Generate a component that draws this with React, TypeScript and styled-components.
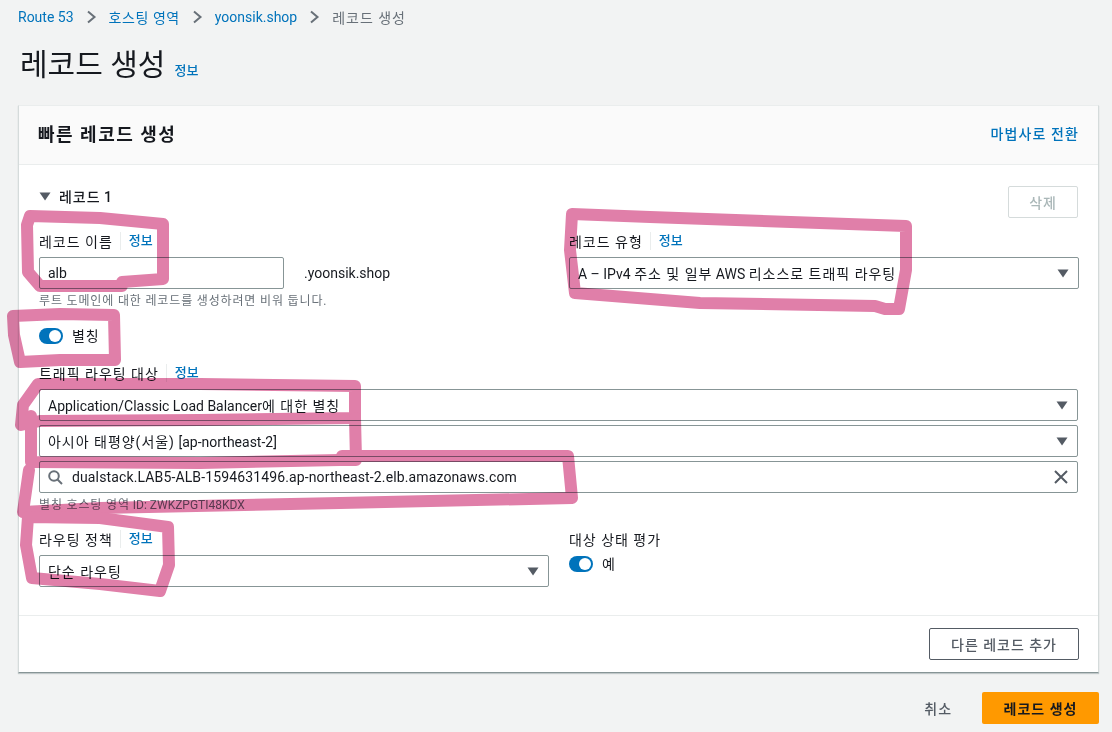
import React from 'react';
import styled, { createGlobalStyle } from 'styled-components';

const fontStack = `Roboto, "Noto Sans CJK KR", sans-serif`;

const GlobalStyle = createGlobalStyle`
  html, body {
    margin: 0;
    padding: 0;
    background-color: #f2f3f3;
    font-family: ${fontStack};
    color: #16191f;
  }
`;

const PageWrapper = styled.div`
  position: relative;
  width: 1112px;
  height: 732px;
  overflow: hidden;
  box-sizing: border-box;
  padding: 0 13px 0 18px;
`;

// Korean runs are set wider than the latin text next to them
const Ko = styled.span`
  letter-spacing: 0.07em;
`;

const Breadcrumbs = styled.nav`
  display: flex;
  align-items: center;
  height: 34px;
  gap: 12px;
  font-size: 14px;
`;

const CrumbLink = styled.span`
  color: #0073bb;
  letter-spacing: 0.04em;

  &:first-child,
  &:nth-child(5) {
    letter-spacing: 0;
  }
`;

const CrumbCurrent = styled.span`
  color: #687078;
  letter-spacing: 0.07em;
`;

const TitleRow = styled.div`
  display: flex;
  align-items: baseline;
  gap: 9px;
  height: 71px;
  padding: 11px 0 0 2px;
  box-sizing: border-box;
`;

const PageTitle = styled.h1`
  margin: 0;
  font-size: 30px;
  font-weight: 400;
  line-height: 40px;
`;

const InfoLink = styled.a`
  color: #0073bb;
  font-size: 13px;
  font-weight: 500;
`;

const Card = styled.section`
  background: #fff;
  border: 1px solid #d5dbdb;
  border-top-color: #eaeded;
  border-bottom-color: #879596;
  box-shadow: 0 1px 1px rgba(0, 28, 36, 0.2);
  height: 568px;
  box-sizing: border-box;
  display: flex;
  flex-direction: column;
`;

const CardHeader = styled.header`
  display: flex;
  align-items: center;
  justify-content: space-between;
  height: 59px;
  flex: none;
  padding: 0 19px 5px 19px;
  background: #fafafa;
  border-bottom: 1px solid #eaeded;
  box-sizing: border-box;
`;

const CardTitle = styled.h2`
  margin: 0;
  font-size: 18px;
  font-weight: 700;
  letter-spacing: 1.5px;
`;

const HeaderAction = styled.a`
  color: #0073bb;
  font-size: 14px;
  font-weight: 500;
  letter-spacing: 1.1px;
`;

const CardBody = styled.div`
  flex: 1;
  padding: 21px 20px 0;
`;

const RecordHeader = styled.div`
  display: flex;
  align-items: flex-start;
  justify-content: space-between;
  height: 32px;
  margin-bottom: 14px;
`;

const RecordToggle = styled.div`
  display: flex;
  align-items: center;
  gap: 8px;
  height: 20px;
  font-size: 14px;
  font-weight: 500;
`;

const FieldGrid = styled.div`
  display: grid;
  grid-template-columns: 510px 510px;
  column-gap: 20px;
`;

const Label = styled.div`
  display: flex;
  align-items: center;
  height: 18px;
  margin-bottom: 7px;
  font-size: 14px;
  color: #16191f;
`;

const LabelInfo = styled(InfoLink)`
  margin-left: 7px;
  padding-left: 8px;
  border-left: 1px solid #eaeded;
  line-height: 18px;
`;

const InputRow = styled.div`
  display: flex;
  align-items: center;
  gap: 20px;
  font-size: 14px;
  color: #16191f;
`;

const Field = styled.div<{ $width?: number }>`
  display: flex;
  align-items: center;
  box-sizing: border-box;
  height: 32px;
  width: ${(p) => (p.$width ? `${p.$width}px` : '100%')};
  padding: 0 9px 0 8px;
  background: #fff;
  border: 1px solid #879596;
  border-radius: 2px;
  font-size: 14px;
  color: #16191f;
  white-space: nowrap;
`;

const FieldText = styled.span`
  flex: 1;
  white-space: pre;
`;

const SearchText = styled(FieldText)`
  margin-left: 9px;
  letter-spacing: 0.13px;
`;

const Hint = styled.div`
  font-size: 12px;
  line-height: 16px;
  color: #687078;
  margin-top: 4px;
`;

const ToggleRow = styled.div`
  display: flex;
  align-items: center;
  gap: 9px;
  font-size: 14px;
`;

const ToggleLabel = styled(Ko)`
  margin-top: -3px;
`;

const AliasRow = styled(ToggleRow)`
  margin: 19px 0 20px;
  height: 16px;
`;

const HealthRow = styled(ToggleRow)`
  height: 16px;
  margin: 8px 0 0 0;
`;

const Track = styled.span`
  position: relative;
  display: inline-block;
  width: 24px;
  height: 16px;
  border-radius: 8px;
  background: #0073bb;
`;

const Knob = styled.span`
  position: absolute;
  top: 2px;
  right: 2px;
  width: 12px;
  height: 12px;
  border-radius: 50%;
  background: #fff;
`;

const Stack = styled.div`
  display: flex;
  flex-direction: column;
  gap: 4px;
`;

const PolicyGrid = styled(FieldGrid)`
  margin-top: 17px;
`;

const CardFooter = styled.footer`
  display: flex;
  justify-content: flex-end;
  align-items: center;
  flex: none;
  height: 57px;
  padding: 0 19px 0 0;
  border-top: 1px solid #eaeded;
  box-sizing: border-box;
`;

const OutlineButton = styled.button`
  width: 150px;
  height: 32px;
  background: #fff;
  border: 1px solid #545b64;
  border-radius: 2px;
  color: #545b64;
  font: 500 14px ${fontStack};
`;

const DeleteButton = styled(OutlineButton)`
  width: 70px;
  border-color: #d5dbdb;
  color: #aab7b8;
`;

const PageActions = styled.div`
  display: flex;
  justify-content: flex-end;
  align-items: center;
  gap: 30px;
  padding-top: 19px;
`;

const CancelLink = styled.span`
  color: #545b64;
  font-size: 14px;
  font-weight: 500;
`;

const PrimaryButton = styled.button`
  width: 117px;
  height: 32px;
  background: #ff9900;
  border: none;
  border-radius: 2px;
  color: #16191f;
  font: 700 14px ${fontStack};
`;

const Scribbles = styled.svg`
  position: absolute;
  left: 0;
  top: 0;
  mix-blend-mode: multiply;
  pointer-events: none;
`;

const Scribble = styled.path`
  fill: none;
  stroke: #e07fa9;
  stroke-width: 12;
  stroke-linejoin: round;
  stroke-linecap: round;
`;

const Chevron = () => (
  <svg width="11" height="14" viewBox="0 0 11 14" fill="none">
    <path d="M2 1.5 L8.5 7 L2 12.5" stroke="#687078" strokeWidth="2" />
  </svg>
);

const Caret = () => (
  <svg width="12" height="9" viewBox="0 0 12 9">
    <path d="M0.5 0.5 H11.5 L6 8.5 Z" fill="#545b64" />
  </svg>
);

const SearchIcon = () => (
  <svg width="15" height="15" viewBox="0 0 15 15" fill="none" stroke="#687078" strokeWidth="2">
    <circle cx="6" cy="6" r="4.8" />
    <path d="M9.5 9.5 L14 14" />
  </svg>
);

const ClearIcon = () => (
  <svg width="14" height="14" viewBox="0 0 14 14" fill="none" stroke="#545b64" strokeWidth="2">
    <path d="M1 1 L13 13 M13 1 L1 13" />
  </svg>
);

const Toggle = () => (
  <Track>
    <Knob />
  </Track>
);

const App: React.FC = () => {
  return (
    <PageWrapper>
      <GlobalStyle />
      <Breadcrumbs>
        <CrumbLink>Route 53</CrumbLink>
        <Chevron />
        <CrumbLink>호스팅 영역</CrumbLink>
        <Chevron />
        <CrumbLink>yoonsik.shop</CrumbLink>
        <Chevron />
        <CrumbCurrent>레코드 생성</CrumbCurrent>
      </Breadcrumbs>

      <TitleRow>
        <PageTitle>레코드 생성</PageTitle>
        <InfoLink>정보</InfoLink>
      </TitleRow>

      <Card>
        <CardHeader>
          <CardTitle>빠른 레코드 생성</CardTitle>
          <HeaderAction>마법사로 전환</HeaderAction>
        </CardHeader>

        <CardBody>
          <RecordHeader>
            <RecordToggle>
              <Caret />
              <span><Ko>레코드</Ko> 1</span>
            </RecordToggle>
            <DeleteButton disabled><Ko>삭제</Ko></DeleteButton>
          </RecordHeader>

          <FieldGrid>
            <div>
              <Label>
                <Ko>레코드 이름</Ko><LabelInfo>정보</LabelInfo>
              </Label>
              <InputRow>
                <Field $width={245}>alb</Field>
                .yoonsik.shop
              </InputRow>
              <Hint><Ko>루트 도메인에 대한 레코드를 생성하려면 비워 둡니다.</Ko></Hint>
            </div>
            <div>
              <Label>
                <Ko>레코드 유형</Ko><LabelInfo>정보</LabelInfo>
              </Label>
              <Field>
                <FieldText>A – IPv4 <Ko>주소 및 일부</Ko> AWS <Ko>리소스로 트래픽 라우팅</Ko></FieldText>
                <Caret />
              </Field>
            </div>
          </FieldGrid>

          <AliasRow>
            <Toggle />
            <ToggleLabel>별칭</ToggleLabel>
          </AliasRow>

          <Label>
            <Ko>트래픽 라우팅 대상</Ko><LabelInfo>정보</LabelInfo>
          </Label>
          <Stack>
            <Field>
              <FieldText>Application/Classic Load Balancer<Ko>에 대한 별칭</Ko></FieldText>
              <Caret />
            </Field>
            <Field>
              <FieldText><Ko>아시아 태평양(서울)</Ko> [ap-northeast-2]</FieldText>
              <Caret />
            </Field>
            <Field>
              <SearchIcon />
              <SearchText>dualstack.LAB5-ALB-1594631496.ap-northeast-2.elb.amazonaws.com</SearchText>
              <ClearIcon />
            </Field>
          </Stack>
          <Hint><Ko>별칭 호스팅 영역</Ko> ID: ZWKZPGTI48KDX</Hint>

          <PolicyGrid>
            <div>
              <Label>
                <Ko>라우팅 정책</Ko><LabelInfo>정보</LabelInfo>
              </Label>
              <Field>
                <FieldText><Ko>단순 라우팅</Ko></FieldText>
                <Caret />
              </Field>
            </div>
            <div>
              <Label><Ko>대상 상태 평가</Ko></Label>
              <HealthRow>
                <Toggle />
                <ToggleLabel>예</ToggleLabel>
              </HealthRow>
            </div>
          </PolicyGrid>
        </CardBody>

        <CardFooter>
          <OutlineButton><Ko>다른 레코드 추가</Ko></OutlineButton>
        </CardFooter>
      </Card>

      <PageActions>
        <CancelLink><Ko>취소</Ko></CancelLink>
        <PrimaryButton><Ko>레코드 생성</Ko></PrimaryButton>
      </PageActions>

      <Scribbles width="1112" height="732" viewBox="0 0 1112 732">
        <Scribble d="M30 216 L100 218 L163 224 L163 279 L122 282 L122 286 L40 286 L28 272 L27 225 Z" />
        <Scribble d="M572 214 L650 217 L906 226 L906 270 L899 309 L885 309 L875 306 L700 303 L575 293 L570 250 Z" />
        <Scribble d="M13 316 L60 314 L114 315 L115 360 L60 360 L20 362 L14 335 Z" />
        <Scribble d="M21 425 L23 405 L38 384 L200 384 L355 386 L355 418 L200 420 L40 421 Z" />
        <Scribble d="M31 416 L31 462 L200 463 L340 460 L356 460 L355 418" />
        <Scribble d="M342 456 L568 456 L572 498 L340 503 L100 508 L23 512 L29 470" />
        <Scribble d="M28 517 L100 518 L168 527 L169 565 L160 591 L100 584 L32 578 L26 545 Z" />
      </Scribbles>
    </PageWrapper>
  );
};

export default App;
